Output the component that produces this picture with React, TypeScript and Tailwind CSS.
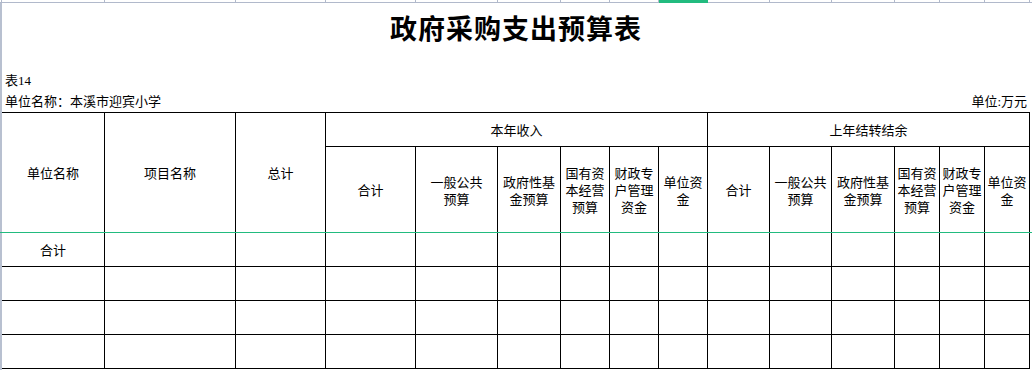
const cols =
  "grid-cols-[103px_131px_90px_90px_82px_63px_49px_49px_49px_62px_62px_63px_45px_45px_45px]";

const subHeads: string[][] = [
  ["合计"],
  ["一般公共", "预算"],
  ["政府性基", "金预算"],
  ["国有资", "本经营", "预算"],
  ["财政专", "户管理", "资金"],
  ["单位资", "金"],
];

function Cell({ lines, className = "" }: { lines?: string[]; className?: string }) {
  return (
    <div
      className={`flex flex-col items-center justify-center border-r border-b border-black text-center leading-[17px] ${className}`}
    >
      {lines?.map((l) => (
        <span key={l}>{l}</span>
      ))}
    </div>
  );
}

export default function App() {
  const rows = [["合计"], [], [], []];

  return (
    <div
      className="relative w-[1032px] h-[370px] overflow-hidden bg-white text-[13px] text-black"
      style={{ fontFamily: '"Liberation Serif", "Noto Sans CJK SC", serif' }}
    >
      {/* sheet column ticks */}
      <div className="flex h-[3px] border-b border-[#b1b9cb]">
        <div className="w-[2px] border-r border-[#b1b9cb]" />
        <div className={`grid ${cols}`}>
          {Array.from({ length: 15 }).map((_, i) => (
            <div
              key={i}
              className={i === 8 ? "h-[3px] bg-[#22bb7f]" : "border-r border-[#b1b9cb]"}
            />
          ))}
        </div>
      </div>

      <div className="border-l-2 border-[#b8c0d0] h-[367px]">
        <div className="w-[1028px]">
          <div
            className="flex h-[50px] items-center justify-center text-[27px] font-bold tracking-[1px]"
            style={{ fontFamily: '"Noto Sans CJK SC", sans-serif' }}
          >
            政府采购支出预算表
          </div>
          <div className="h-[17px]" />
          <div className="flex h-[21px] items-center pl-[3px]">表14</div>
        </div>
        <div className="flex h-[21px] items-center justify-between pl-[3px] pr-[5px]">
          <span>单位名称：本溪市迎宾小学</span>
          <span>单位:万元</span>
        </div>

        <div
          className={`grid ${cols} grid-rows-[34px_86px_34px_34px_34px_34px] w-[1028px] border-t border-black`}
          style={{ fontFamily: '"Noto Sans CJK SC", sans-serif' }}
        >
          <Cell lines={["单位名称"]} className="row-span-2" />
          <Cell lines={["项目名称"]} className="row-span-2" />
          <Cell lines={["总计"]} className="row-span-2" />
          <Cell lines={["本年收入"]} className="col-span-6" />
          <Cell lines={["上年结转结余"]} className="col-span-6" />
          {subHeads.map((s, i) => (
            <Cell key={"a" + i} lines={s} />
          ))}
          {subHeads.map((s, i) => (
            <Cell key={"b" + i} lines={s} />
          ))}
          {rows.map((r, ri) =>
            Array.from({ length: 15 }).map((_, ci) => (
              <Cell key={ri + "-" + ci} lines={ci === 0 ? r : undefined} />
            ))
          )}
        </div>
      </div>

      {/* selection edge */}
      <div className="absolute left-0 right-0 top-[232px] h-px bg-[#22bb7f]" />
    </div>
  );
}
